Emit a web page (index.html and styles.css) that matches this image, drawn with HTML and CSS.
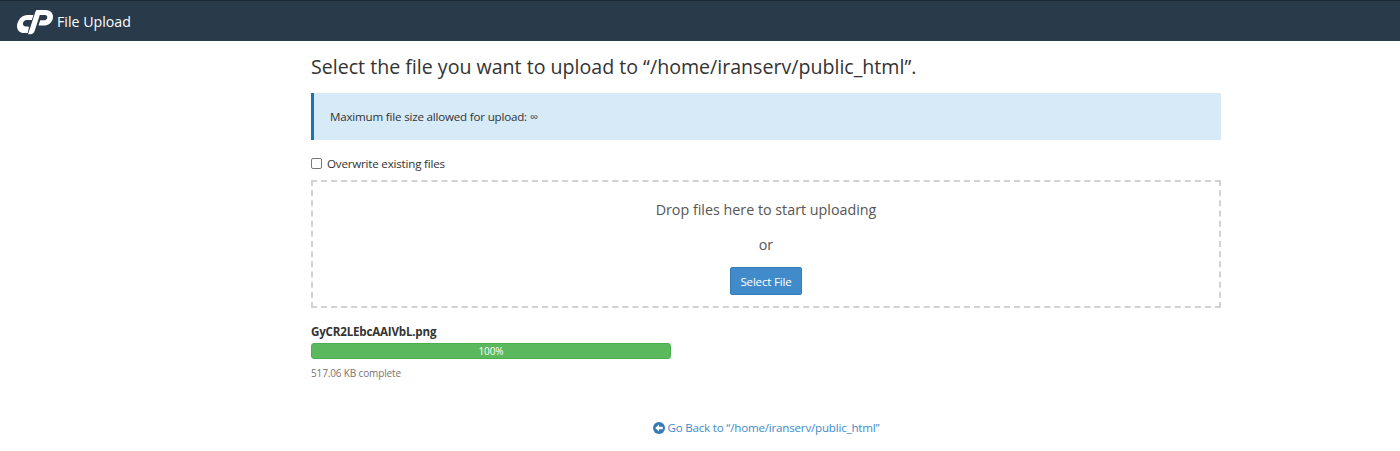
FILE: index.html
```html
<!DOCTYPE html>
<html>
<head>
	<title>File Upload</title>
	<meta charset="utf-8">
	<link rel="stylesheet" href="styles.css">
</head>
<body>
	<header class="topbar">
		<svg class="logo" viewBox="17 10 37 25" width="37" height="25">
			<path fill="#fff" d="M33.500 15 31.800 20H27C25 20 23.500 21 23 23c-.5 2 .8 3.500 2.800 3.500h2c.9 0 1.300.6 1 1.500L27.700 33H24C19 33 16 28.800 17.300 24 18.700 18.800 22.500 15 27.500 15z"/>
			<path fill="#fff" d="M37 10H45.500C50.800 10 54 14 52.800 18.700 51.700 22.800 48.200 25.500 44 25.500H38.500L40.200 20.300H44C45.500 20.300 46.800 19.500 47.200 18 47.700 16.400 46.600 15 45 15H39.800L34.800 30.500C34 33 32.500 34.200 30.500 34.200H28L35.500 11.500C35.800 10.600 36.200 10 37 10z"/>
		</svg>
		<span class="topbar-title">File Upload</span>
	</header>

	<main class="content">
		<h1 class="heading">Select the file you want to upload to “/home/iranserv/public_html”.</h1>

		<div class="notice">Maximum file size allowed for upload: ∞</div>

		<label class="overwrite">
			<input type="checkbox">
			Overwrite existing files
		</label>

		<div class="dropzone">
			<div class="drop-text">Drop files here to start uploading</div>
			<div class="drop-text drop-or">or</div>
			<button class="select-btn">Select File</button>
		</div>

		<div class="upload">
			<div class="upload-name">GyCR2LEbcAAIVbL.png</div>
			<div class="progress">100%</div>
			<div class="upload-size">517.06 KB complete</div>
		</div>

		<div class="back">
			<a href="#">
				<svg class="back-icon" viewBox="0 0 12 12" width="12" height="12">
					<circle cx="6" cy="6" r="6" fill="#337ab7"/>
					<path fill="#fff" d="M2.200 6 6 2.400v2.300h3.800v2.600H6v2.300z"/>
				</svg>
				Go Back to “/home/iranserv/public_html”
			</a>
		</div>
	</main>
</body>
</html>
```

FILE: styles.css
```css
* {
	box-sizing: border-box;
}
body {
	margin: 0;
	background: #fff;
	color: #333;
	font-family: "Open Sans", sans-serif;
	font-size: 11.6px;
	letter-spacing: -.2px;
	line-height: 17px;
}
.topbar {
	display: flex;
	align-items: center;
	height: 41px;
	padding-left: 17px;
	background: #293a4a;
	border-top: 1px solid #1d2a36;
}
.logo {
	display: block;
	margin-top: 3px;
}
.topbar-title {
	margin-left: 3px;
	color: #fff;
	font-size: 14.2px;
	letter-spacing: 0;
}
.content {
	width: 910px;
	margin-left: 311px;
}
.heading {
	margin: 14px 0 14px;
	font-size: 19.6px;
	font-weight: 400;
	letter-spacing: 0;
	line-height: 24px;
}
.notice {
	height: 47px;
	padding: 15px 16px;
	background: #d6eaf8;
	border-left: 3px solid #1b75b3;
}
.overwrite {
	display: flex;
	align-items: center;
	gap: 5px;
	margin-top: 15px;
	height: 17px;
}
.overwrite input {
	appearance: none;
	width: 11px;
	height: 11px;
	margin: 0;
	background: #fff;
	border: 1px solid #777;
	border-radius: 2px;
}
.dropzone {
	display: flex;
	flex-direction: column;
	align-items: center;
	height: 128px;
	margin-top: 8px;
	padding-top: 18px;
	border: 2px dashed #d2d2d2;
	color: #555;
}
.drop-text {
	font-size: 14.3px;
	letter-spacing: 0;
	line-height: 20px;
}
.drop-or {
	margin-top: 15px;
}
.select-btn {
	width: 72px;
	height: 28px;
	margin-top: 12px;
	padding: 0;
	background: #428bca;
	border: 1px solid #357ebd;
	border-radius: 2px;
	color: #fff;
	font-family: inherit;
	font-size: 11.6px;
	letter-spacing: -.2px;
}
.upload {
	margin-top: 15px;
}
.upload-name {
	font-weight: 700;
}
.progress {
	width: 360px;
	height: 16px;
	margin-top: 3px;
	background: #5cb85c;
	border: 1px solid #4cae4c;
	border-radius: 3px;
	color: #fff;
	font-size: 10px;
	letter-spacing: -.1px;
	line-height: 14px;
	text-align: center;
}
.upload-size {
	margin-top: 6px;
	color: #7c7370;
	font-size: 10px;
	letter-spacing: -.14px;
	line-height: 16px;
}
.back {
	margin-top: 38px;
	text-align: center;
}
.back a {
	color: #428bca;
	text-decoration: none;
}
.back-icon {
	vertical-align: -2px;
}
```
